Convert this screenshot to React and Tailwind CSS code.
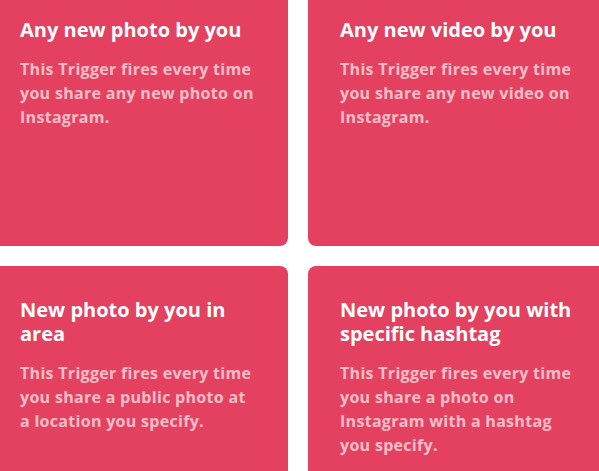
const triggers = [
  {
    title: "Any new photo by you",
    desc: "This Trigger fires every time you share any new photo on Instagram.",
  },
  {
    title: "Any new video by you",
    desc: "This Trigger fires every time you share any new video on Instagram.",
  },
  {
    title: "New photo by you in area",
    desc: "This Trigger fires every time you share a public photo at a location you specify.",
  },
  {
    title: "New photo by you with specific hashtag",
    desc: "This Trigger fires every time you share a photo on Instagram with a hashtag you specify.",
  },
];

const TriggerCard = ({ title, desc }) => {
  return (
    <div className="h-[260px] rounded-lg bg-[#e4405f] px-8 pt-8">
      <h3 className="text-[20px] leading-6 font-bold text-white">{title}</h3>
      <p className="mt-[15px] text-[16px] leading-6 font-bold tracking-[0.3px] text-white/65">
        {desc}
      </p>
    </div>
  );
};

export default function App() {
  return (
    <div
      className="w-[599px] h-[471px] overflow-hidden bg-white"
      style={{ fontFamily: "'Open Sans', sans-serif" }}
    >
      <div className="grid grid-cols-[300px_300px] gap-5 -ml-[12px] -mt-[14px]">
        {triggers.map((t) => (
          <TriggerCard key={t.title} title={t.title} desc={t.desc} />
        ))}
      </div>
    </div>
  );
}
